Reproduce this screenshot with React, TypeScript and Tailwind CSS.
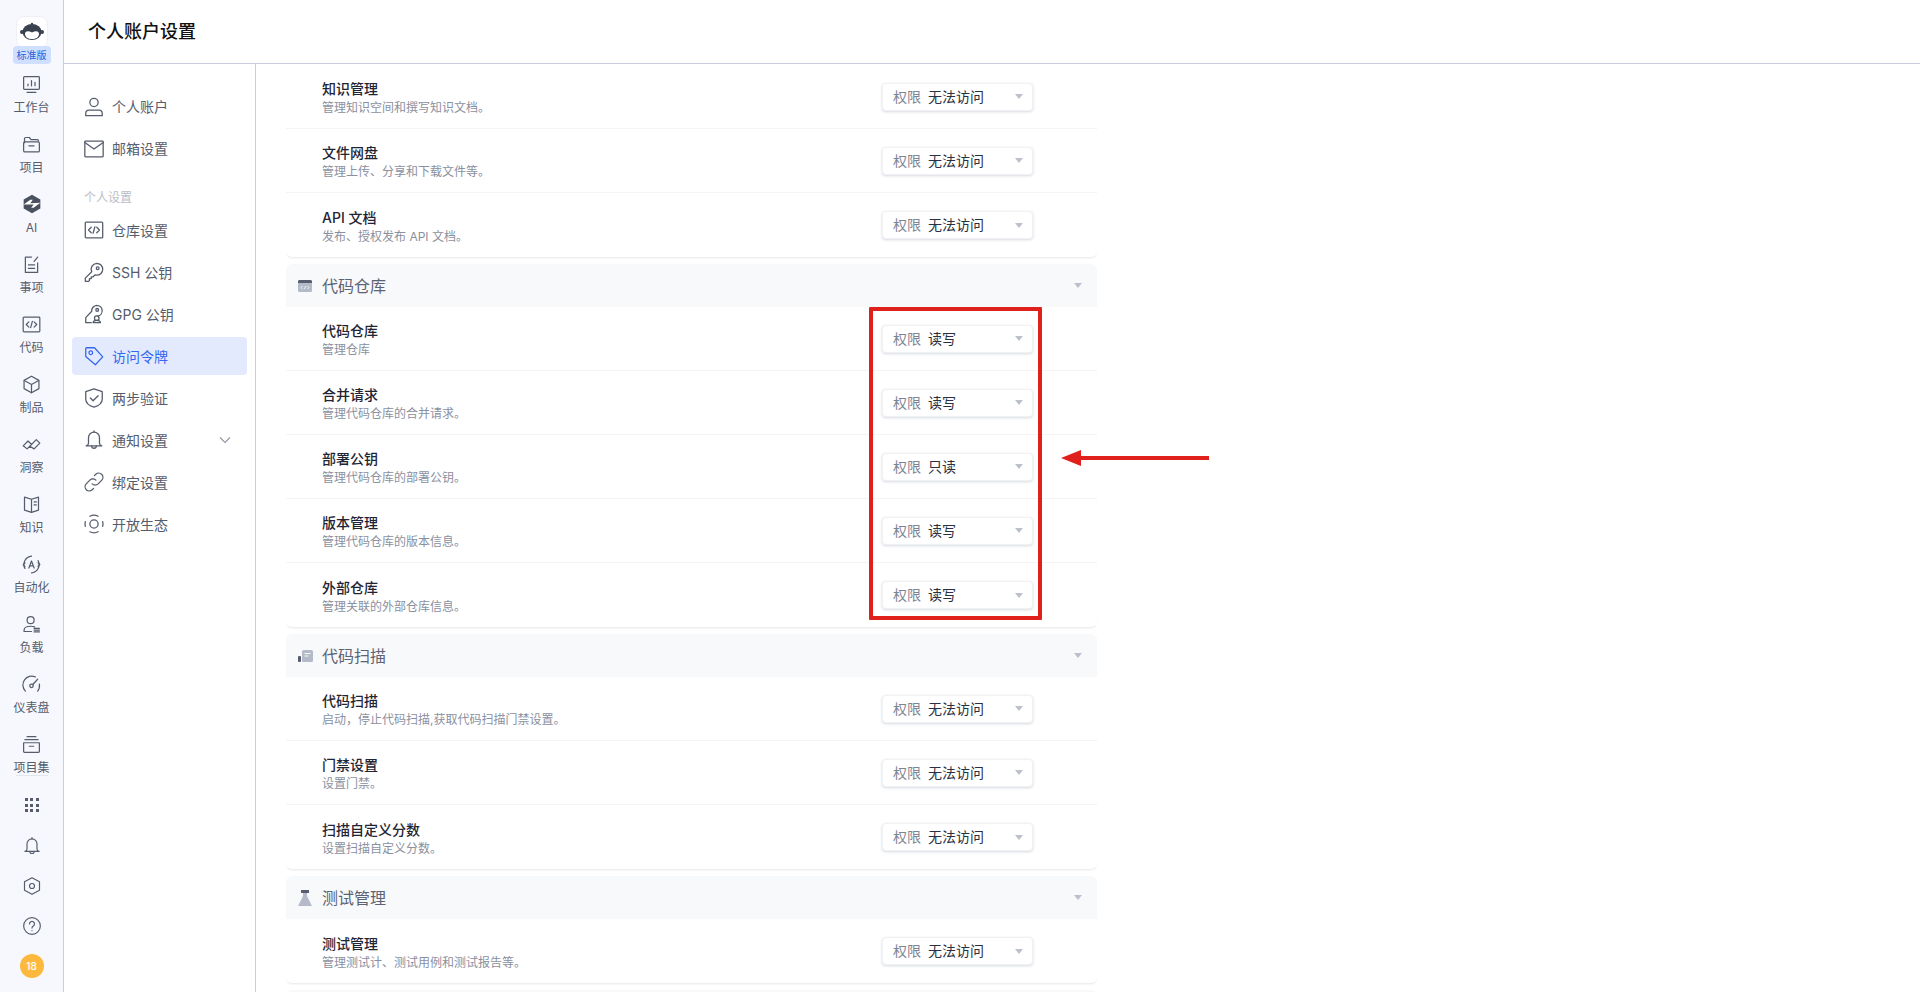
import type { ReactNode } from "react";

function Ico({ size = 20, children, className = "" }: { size?: number; children: ReactNode; className?: string }) {
  return (
    <svg
      width={size}
      height={size}
      viewBox="0 0 24 24"
      fill="none"
      stroke="currentColor"
      strokeWidth={1.4}
      strokeLinecap="round"
      strokeLinejoin="round"
      className={className}
    >
      {children}
    </svg>
  );
}

const icons: Record<string, ReactNode> = {
  board: (
    <>
      <rect x="3" y="3" width="18" height="14.5" rx="1" />
      <path d="M8 13.5v-2M12 13.5V7.5M16 13.5V9.5M7 21h10" />
    </>
  ),
  folder: (
    <>
      <path d="M4 10V5.5A1.5 1.5 0 0 1 5.5 4h4l2 2.5h7A1.5 1.5 0 0 1 20 8" />
      <rect x="3" y="9" width="18" height="11.5" rx="1.5" />
      <path d="M9 13.5h6" />
    </>
  ),
  issue: (
    <>
      <path d="M12 3.5H5v17.5h14V10" />
      <path d="M8.5 12.5h7M8.5 16.5h7M15 8.5l4-5" />
    </>
  ),
  code: (
    <>
      <rect x="2.5" y="3.5" width="19" height="17" rx="1" />
      <path d="M9 9l-3 3 3 3M15 9l3 3-3 3M13 8.5l-2 7" />
    </>
  ),
  box: (
    <>
      <path d="M12 2.5l8.5 4.8v9.4L12 21.5l-8.5-4.8V7.3z" />
      <path d="M3.8 7.5L12 12l8.2-4.5M12 12v9.3" />
    </>
  ),
  insight: <path d="M2.500 13.500L8 8l4 4-5 5zM10 14l7.500-7.500 4 4L15 17z" />,
  book: (
    <>
      <path d="M12 6L4 3.5v15L12 21l8-2.5v-15z" />
      <path d="M12 6v15M15 9h2.5M15 12.5h2.5" />
    </>
  ),
  auto: (
    <>
      <path d="M4.500 16.500A9.500 9.500 0 0 1 12 2.500M19.500 7.500A9.500 9.500 0 0 1 12 21.500" />
      <path d="M9 16l3-8 3 8M10 13.500h4M4.500 10L2.500 12.500l2 2M19.500 14l2-2-2-2" />
    </>
  ),
  load: (
    <>
      <circle cx="11" cy="7" r="4" />
      <path d="M3.500 20v-1.500c0-3 3-4.500 7.500-4.500 2 0 3.500.3 4.500.7M3.500 20H12M15 16.500h6M15 18.500h6M15 20.500h6" />
    </>
  ),
  gauge: (
    <>
      <path d="M5 19.500A10 10 0 0 1 16.500 3.500M19 19.500a10 10 0 0 0 2-8" />
      <circle cx="12" cy="13.500" r="2" />
      <path d="M13.500 12L19 6" />
    </>
  ),
  archive: (
    <>
      <path d="M7 3h10M4.500 6.500h15" />
      <path d="M3 10h18v10a1 1 0 0 1-1 1H4a1 1 0 0 1-1-1z" />
      <path d="M9.500 14h5" />
    </>
  ),
  bell: (
    <>
      <path d="M12 3.500a6 6 0 0 0-6 6v6c0 1.500-1 2.500-2.500 3h17c-1.500-.5-2.500-1.500-2.500-3v-6a6 6 0 0 0-6-6z" />
      <path d="M12 2v1.500M9.500 18.500a2.500 2.500 0 0 0 5 0" />
    </>
  ),
  hex: (
    <>
      <path d="M12 2l9 5v10l-9 5-9-5V7z" />
      <circle cx="12" cy="12" r="3" />
    </>
  ),
  help: (
    <>
      <circle cx="12" cy="12" r="10" />
      <path d="M9 9.500a3 3 0 1 1 4.500 2.600c-1 .6-1.500 1.200-1.500 2.400M12 17.500v.1" />
    </>
  ),
  user: (
    <>
      <circle cx="12" cy="7" r="4.500" />
      <path d="M3 21.500v-2.500c0-2 1.500-3.500 3.500-3.500h11c2 0 3.500 1.500 3.500 3.500v2.500z" />
    </>
  ),
  mail: (
    <>
      <rect x="2" y="3.500" width="20" height="17" rx="0.5" />
      <path d="M2 5l10 7 10-7" />
    </>
  ),
  key: (
    <>
      <path d="M15 2.500a6.500 6.500 0 0 1 0 13c-.7 0-1.400-.1-2-.3l-2 2h-2v2H7v2l-1 1H2.500v-3.500l7-7a6.500 6.500 0 0 1 5.500-9.200z" />
      <circle cx="16" cy="8" r="1.500" />
    </>
  ),
  gpg: (
    <>
      <path d="M15 2.500a6 6 0 0 1 1 11.900M9.500 9a6 6 0 0 1 5.500-6.500M9.500 9L3 16v5.500h6" />
      <circle cx="15.500" cy="7.500" r="1.500" />
      <circle cx="15" cy="16.500" r="2.500" />
      <path d="M11 21.500c0-1.500 1.500-2.500 4-2.500s4 1 4 2.500z" />
    </>
  ),
  tag: (
    <>
      <path d="M3 4a1 1 0 0 1 1-1h8.500l9 10-8 8.500-10.500-9z" />
      <circle cx="8.500" cy="8.500" r="2" />
    </>
  ),
  shield: (
    <>
      <path d="M12 2l9 3v8c0 4.500-4 7.500-9 9-5-1.500-9-4.500-9-9V5z" />
      <path d="M8 12l3 3 5.500-5.500" />
    </>
  ),
  link: (
    <>
      <path d="M10 14a4.500 4.500 0 0 0 6.500 0l4-4A4.600 4.600 0 0 0 14 3.500l-1.500 1.500" />
      <path d="M14 10a4.500 4.500 0 0 0-6.500 0l-4 4a4.600 4.600 0 0 0 6.500 6.500l1.500-1.500" />
    </>
  ),
  eco: (
    <>
      <circle cx="12" cy="12" r="4.500" />
      <path d="M7.500 3.500A10 10 0 0 1 16.500 3.500M21.500 9.500a10 10 0 0 1 0 5M16.500 20.500a10 10 0 0 1-9 0M2.500 14.500a10 10 0 0 1 0-5" />
    </>
  ),
};

const railItems = [
  { label: "工作台", icon: "board" },
  { label: "项目", icon: "folder" },
  { label: "AI", icon: "ai" },
  { label: "事项", icon: "issue" },
  { label: "代码", icon: "code" },
  { label: "制品", icon: "box" },
  { label: "洞察", icon: "insight" },
  { label: "知识", icon: "book" },
  { label: "自动化", icon: "auto" },
  { label: "负载", icon: "load" },
  { label: "仪表盘", icon: "gauge" },
  { label: "项目集", icon: "archive" },
];

const menuTop = [
  { label: "个人账户", icon: "user" },
  { label: "邮箱设置", icon: "mail" },
];

const menuRest = [
  { label: "仓库设置", icon: "code" },
  { label: "SSH 公钥", icon: "key" },
  { label: "GPG 公钥", icon: "gpg" },
  { label: "访问令牌", icon: "tag", active: true },
  { label: "两步验证", icon: "shield" },
  { label: "通知设置", icon: "bell", arrow: true },
  { label: "绑定设置", icon: "link" },
  { label: "开放生态", icon: "eco" },
];

const NONE = "无法访问";

const groups = [
  {
    title: "",
    rows: [
      { name: "知识管理", desc: "管理知识空间和撰写知识文档。", value: NONE },
      { name: "文件网盘", desc: "管理上传、分享和下载文件等。", value: NONE },
      { name: "API 文档", desc: "发布、授权发布 API 文档。", value: NONE },
    ],
  },
  {
    title: "代码仓库",
    icon: "repo",
    rows: [
      { name: "代码仓库", desc: "管理仓库", value: "读写" },
      { name: "合并请求", desc: "管理代码仓库的合并请求。", value: "读写" },
      { name: "部署公钥", desc: "管理代码仓库的部署公钥。", value: "只读" },
      { name: "版本管理", desc: "管理代码仓库的版本信息。", value: "读写" },
      { name: "外部仓库", desc: "管理关联的外部仓库信息。", value: "读写" },
    ],
  },
  {
    title: "代码扫描",
    icon: "scan",
    rows: [
      { name: "代码扫描", desc: "启动，停止代码扫描,获取代码扫描门禁设置。", value: NONE },
      { name: "门禁设置", desc: "设置门禁。", value: NONE },
      { name: "扫描自定义分数", desc: "设置扫描自定义分数。", value: NONE },
    ],
  },
  {
    title: "测试管理",
    icon: "flask",
    rows: [{ name: "测试管理", desc: "管理测试计、测试用例和测试报告等。", value: NONE }],
  },
];

function Caret() {
  return (
    <svg width="8" height="5" viewBox="0 0 8 5">
      <path d="M0 0h8L4 5z" fill="#bcc0cc" />
    </svg>
  );
}

function AiIcon() {
  return (
    <svg width="20" height="20" viewBox="0 0 24 24">
      <path d="M12 1l10 5.500v11L12 23 2 17.500v-11z" fill="#4a5060" />
      <path d="M2 12.500l8-5.500 3 0-3 4 12-.500-8 6-3 0 3-4z" fill="#fff" />
    </svg>
  );
}

function GroupIcon({ name }: { name?: string }) {
  if (name === "repo") {
    return (
      <svg width="14" height="14" viewBox="0 0 14 14">
        <rect y="1" width="14" height="12" rx="1.500" fill="#b4bac8" />
        <path d="M1.500 1h11A1.500 1.500 0 0 1 14 2.500V4H0V2.500A1.500 1.500 0 0 1 1.500 1z" fill="#565d6e" />
        <path d="M4.500 7L3 8.500 4.500 10M9.500 7L11 8.500 9.500 10M7.700 7l-1.300 3" stroke="#fff" strokeWidth="0.800" fill="none" />
      </svg>
    );
  }
  if (name === "scan") {
    return (
      <svg width="16" height="14" viewBox="0 0 16 14">
        <rect x="4" y="1" width="11" height="12" rx="1.500" fill="#b4bac8" />
        <rect x="0" y="7" width="3" height="6" rx="1" fill="#565d6e" />
        <path d="M6.500 4.500h6M6.500 7h4" stroke="#fff" strokeWidth="0.900" />
      </svg>
    );
  }
  return (
    <svg width="14" height="16" viewBox="0 0 14 16">
      <rect x="3" y="0" width="8" height="3" fill="#565d6e" />
      <path d="M5 3h4v3l5 10H0L5 6z" fill="#b4bac8" />
    </svg>
  );
}

function Logo() {
  return (
    <svg width="24" height="20" viewBox="0 0 24 20">
      <circle cx="12" cy="2" r="1.200" fill="#3a4250" />
      <ellipse cx="12" cy="10" rx="9.500" ry="8" fill="#3a4250" />
      <circle cx="2" cy="10" r="2" fill="#3a4250" />
      <circle cx="22" cy="10" r="2" fill="#3a4250" />
      <path d="M5 12c0-3 3-3.500 7-1.500 4-2 7-1.500 7 1.500s-3 5-7 5-7-2-7-5z" fill="#fff" />
    </svg>
  );
}

function Row({ name, desc, value, last }: { name: string; desc: string; value: string; last: boolean }) {
  return (
    <div className={`flex h-[64px] items-center pl-[36px] ${last ? "" : "border-b border-[#f3f4f7]"}`}>
      <div className="w-[560px] pt-[2px]">
        <div className="text-[14px] leading-[20px] font-medium text-[#1f2533]">{name}</div>
        <div className="text-[12px] leading-[17px] text-[#8a90a0]">{desc}</div>
      </div>
      <div className="flex h-[28px] w-[151px] items-center justify-between rounded-[4px] border border-[#f0f1f4] bg-white pr-[9px] pl-[10px] shadow-[0_1px_3px_rgba(40,50,80,0.18)]">
        <div className="flex items-center text-[14px] leading-[20px]">
          <span className="w-[35px] text-[#7d8494]">权限</span>
          <span className="text-[#2a3040]">{value}</span>
        </div>
        <Caret />
      </div>
    </div>
  );
}

export default function App() {
  return (
    <div className="relative flex h-screen overflow-hidden bg-white font-['Inter','Noto_Sans_CJK_SC',sans-serif]">
      {/* Left rail */}
      <aside className="flex w-[64px] shrink-0 flex-col items-center border-r border-[#c9ccdc] bg-[#f7f8fd] pt-[16px]">
        <div className="relative flex h-[32px] w-[32px] items-center justify-center rounded-[8px] border border-[#eef0f6] bg-white">
          <Logo />
        </div>
        <div className="z-10 mt-[-2px] mb-[8px] flex h-[18px] w-[38px] items-center justify-center rounded-[4px] bg-[#cfdfff] text-[10px] leading-none text-[#2b5fd9]">
          标准版
        </div>
        {railItems.map((item) => (
          <div key={item.label} className="flex h-[60px] w-full flex-col items-center pt-[2px] text-[#555c6c]">
            <div className="flex h-[20px] items-center justify-center">
              {item.icon === "ai" ? <AiIcon /> : <Ico size={21}>{icons[item.icon]}</Ico>}
            </div>
            <div className="mt-[5px] text-[12px] leading-[18px]">{item.label}</div>
          </div>
        ))}
        <div className="mt-[-17px] h-px w-[32px] bg-[#e4e6ec]" />
        <div className="mt-[22px] grid grid-cols-3 gap-[2.500px]">
          {Array.from({ length: 9 }).map((_, i) => (
            <span key={i} className="h-[3px] w-[3px] bg-[#565c6b]" />
          ))}
        </div>
        <div className="mt-[24px] flex flex-col items-center gap-[20px] text-[#555c6c]">
          <Ico>{icons.bell}</Ico>
          <Ico>{icons.hex}</Ico>
          <Ico>{icons.help}</Ico>
        </div>
        <div className="mt-[18px] flex h-[24px] w-[24px] items-center justify-center rounded-full bg-[#fdb93d] text-[10px] font-medium text-white">
          18
        </div>
      </aside>

      <div className="flex min-w-0 flex-1 flex-col">
        <header className="flex h-[64px] shrink-0 items-center border-b border-[#c9ccdc] pl-[24px] text-[18px] font-medium text-[#111]">
          个人账户设置
        </header>
        <div className="flex min-h-0 flex-1">
          {/* Settings menu */}
          <nav className="w-[192px] shrink-0 border-r border-[#c9ccdc] px-[8px] pt-[22px]">
            {menuTop.map((m) => (
              <div key={m.label} className="flex h-[42px] items-center pl-[11px] text-[14px] text-[#555c6c]">
                <Ico size={22}>{icons[m.icon]}</Ico>
                <span className="ml-[7px] translate-y-[-1px]">{m.label}</span>
              </div>
            ))}
            <div className="mt-[19px] mb-[4px] pl-[12px] text-[12px] leading-[18px] text-[#b9bcc6]">个人设置</div>
            <div className="flex flex-col gap-[4px]">
              {menuRest.map((m) => (
                <div
                  key={m.label}
                  className={`flex h-[38px] items-center rounded-[4px] pl-[11px] text-[14px] ${
                    m.active ? "bg-[#e3eafd] text-[#3367f0]" : "text-[#555c6c]"
                  }`}
                >
                  <Ico size={22}>{icons[m.icon]}</Ico>
                  <span className="ml-[7px]">{m.label}</span>
                  {m.arrow && (
                    <svg width="14" height="14" viewBox="0 0 14 14" className="mr-[15px] ml-auto" fill="none" stroke="#9499a6" strokeWidth="1.200">
                      <path d="M2 4.500l5 5 5-5" />
                    </svg>
                  )}
                </div>
              ))}
            </div>
          </nav>

          {/* Permission groups */}
          <main className="min-w-0 flex-1 overflow-hidden pt-px pl-[30px]">
            <div className="flex w-[811px] flex-col gap-[6px]">
              {groups.map((g, gi) => (
                <section key={gi} className="rounded-[6px] border-b border-[#eceef2] shadow-[0_1px_1px_rgba(40,50,80,0.04)]">
                  {g.title && (
                    <div className="flex h-[43px] items-center justify-between rounded-t-[6px] bg-[#f8f9fb] pr-[15px] pl-[12px]">
                      <div className="flex items-center">
                        <span className="flex w-[24px] justify-start">
                          <GroupIcon name={g.icon} />
                        </span>
                        <span className="text-[16px] leading-[24px] text-[#5c6374]">{g.title}</span>
                      </div>
                      <Caret />
                    </div>
                  )}
                  {g.rows.map((r, i) => (
                    <Row key={r.name} {...r} last={i === g.rows.length - 1} />
                  ))}
                </section>
              ))}
              <div className="h-[43px] rounded-t-[6px] bg-[#f8f9fb]" />
            </div>
          </main>
        </div>
      </div>

      {/* Red annotation over the permission column */}
      <div className="absolute top-[307px] left-[869px] h-[313px] w-[173px] rounded-[1px] border-4 border-[#e0201a]" />
      <div className="absolute top-[450px] left-[1061px] flex items-center">
        <svg width="148" height="16" viewBox="0 0 148 16">
          <path d="M0 8L20 0v6h128v4H20v6z" fill="#e0201a" />
        </svg>
      </div>
    </div>
  );
}
